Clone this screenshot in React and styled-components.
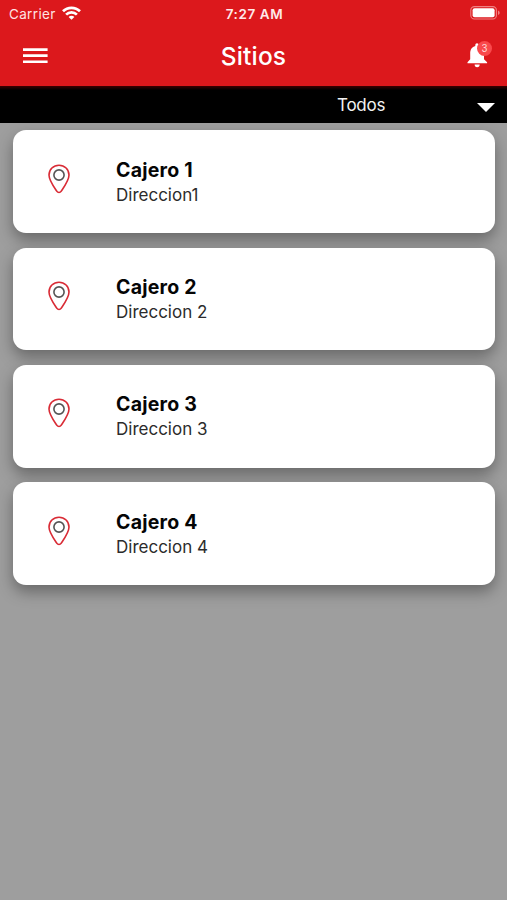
import React from 'react';
import styled, { createGlobalStyle } from 'styled-components';

const GlobalStyle = createGlobalStyle`
  * {
    box-sizing: border-box;
  }

  body {
    margin: 0;
    background: #9e9e9e;
    font-family: Inter, 'Liberation Sans', sans-serif;
  }
`;

const Screen = styled.div`
  display: flex;
  flex-direction: column;
  width: 100%;
  height: 100vh;
  overflow: hidden;
  background: #9e9e9e;
`;

const Header = styled.header`
  height: 86px;
  background: #dc181c;
  color: #fff;
`;

const StatusBar = styled.div`
  display: grid;
  grid-template-columns: 1fr auto 1fr;
  align-items: center;
  height: 27px;
  padding: 0 7px 0 9px;
`;

const Carrier = styled.div`
  display: flex;
  align-items: center;
  gap: 6px;
  font-size: 13.5px;
  line-height: 28px;
  letter-spacing: 0.34px;
  color: #ffe3e3;

  svg {
    margin-bottom: 2px;
  }
`;

const Time = styled.div`
  font-size: 13.5px;
  font-weight: 600;
  line-height: 28px;
  letter-spacing: 0.6px;
  color: #ffe9e9;
`;

const Battery = styled.svg`
  justify-self: end;
  margin-bottom: 2px;
`;

const NavBar = styled.div`
  display: grid;
  grid-template-columns: 1fr auto 1fr;
  align-items: center;
  height: 58px;
  padding: 0 13px;
`;

const Title = styled.h1`
  margin: 0;
  font-size: 24.5px;
  font-weight: 500;
  line-height: 58px;
  letter-spacing: 0.15px;
`;

const IconButton = styled.button`
  display: flex;
  position: relative;
  justify-self: ${(props) => (props.$end ? 'end' : 'start')};
  margin-left: ${(props) => (props.$end ? 0 : '10px')};
  padding: 0;
  border: none;
  background: none;
  color: #fff;
  cursor: pointer;

  svg {
    margin-bottom: ${(props) => (props.$end ? '2px' : '1px')};
  }
`;

const Badge = styled.span`
  position: absolute;
  top: 0;
  right: 2px;
  width: 15px;
  height: 15px;
  border-radius: 50%;
  background: #f9494c;
  color: #ffdada;
  font-size: 10px;
  line-height: 15px;
  text-align: center;
`;

const FilterBar = styled.div`
  display: flex;
  justify-content: flex-end;
  height: 37px;
  padding-right: 12px;
  background: linear-gradient(#3c0000, #000 4px);
`;

const Select = styled.button`
  display: flex;
  align-items: center;
  justify-content: space-between;
  width: 158px;
  height: 37px;
  padding: 0;
  border: none;
  background: none;
  color: #f2f2f2;
  font-family: inherit;
  font-size: 17px;
  letter-spacing: -0.25px;
  cursor: pointer;

  svg {
    margin-top: 5px;
  }
`;

const List = styled.main`
  display: flex;
  flex-direction: column;
  gap: 14.6px;
  padding: 7.4px 12.5px 0 13px;
`;

const Card = styled.article`
  display: flex;
  height: 102.7px;
  padding: 26.5px 35px 0;
  border-radius: 13px;
  background: #fff;
  box-shadow: 0 7px 15px rgba(0, 0, 0, 0.34);
`;

const PinBox = styled.div`
  width: 68px;
  padding-top: 7px;
`;

const Name = styled.h2`
  margin: 0;
  font-size: 19.5px;
  font-weight: 700;
  line-height: 26px;
  letter-spacing: 0.24px;
  color: #050505;
`;

const Address = styled.p`
  margin: 0;
  font-size: 17px;
  line-height: 25.6px;
  letter-spacing: 0;
  color: #2b2b2b;
`;

const sites = [
  { id: 1, name: 'Cajero 1', address: 'Direccion1' },
  { id: 2, name: 'Cajero 2', address: 'Direccion 2' },
  { id: 3, name: 'Cajero 3', address: 'Direccion 3' },
  { id: 4, name: 'Cajero 4', address: 'Direccion 4' },
];

const WifiIcon = () => (
  <svg width="19" height="14" viewBox="0 0 19 14" fill="none" stroke="#fff" strokeWidth="2.7">
    <path d="M1 5.3C5.7.6 13.3.6 18 5.3" />
    <path d="M4.1 8.6C7.1 5.6 11.9 5.6 14.9 8.6" />
    <path d="M9.5 13.8 6.6 11C8.2 9.4 10.8 9.4 12.4 11Z" fill="#fff" stroke="none" />
  </svg>
);

const BatteryIcon = () => (
  <Battery width="30" height="14" viewBox="0 0 30 14">
    <rect x="0.8" y="0.6" width="25.6" height="12.4" rx="3.6" fill="none" stroke="#f08082" strokeWidth="1.1" />
    <rect x="2.6" y="2.3" width="22" height="9" rx="2" fill="#fff" />
    <path d="M28 4.6c2.2.8 2.2 3.6 0 4.4z" fill="#f08082" />
  </Battery>
);

const MenuIcon = () => (
  <svg width="25" height="16" viewBox="0 0 25 16" fill="#fff">
    <path d="M0 .2h24.6v2.7H0zM0 6.3h24.6v2.7H0zM0 12.4h24.6v2.7H0z" />
  </svg>
);

const BellIcon = () => (
  <svg width="27" height="28" viewBox="0 0 27 28" fill="#fff">
    <path d="M8.3 4.2c0-1.1.7-1.9 1.7-1.9s1.7.8 1.7 1.9v.7c3.4.8 5.3 3.7 5.3 7.2v6.1l3.1 3.1v1H.5v-1l2.7-3.1v-6.1c0-3.5 1.8-6.4 5.1-7.2z" />
    <path d="M7.6 23.6h5.1a2.5 2.5 0 0 1-5.1 0z" />
  </svg>
);

const PinIcon = () => (
  <svg width="22" height="30" viewBox="0 0 22 30" fill="none">
    <path
      d="M11 1.2C5.4 1.2 1 5.5 1 11c0 5.3 5.1 12.2 7.9 16.4 1 1.5 3.2 1.5 4.2 0C15.9 23.2 21 16.3 21 11c0-5.5-4.4-9.8-10-9.8z"
      stroke="#d92b35"
      strokeWidth="1.6"
    />
    <circle cx="11" cy="11" r="5.1" stroke="#555" strokeWidth="1.6" />
  </svg>
);

const App = () => (
  <>
    <GlobalStyle />
    <Screen>
      <Header>
        <StatusBar>
          <Carrier>
            Carrier
            <WifiIcon />
          </Carrier>
          <Time>7:27 AM</Time>
          <BatteryIcon />
        </StatusBar>
        <NavBar>
          <IconButton aria-label="Menu">
            <MenuIcon />
          </IconButton>
          <Title>Sitios</Title>
          <IconButton $end aria-label="Notificaciones">
            <BellIcon />
            <Badge>3</Badge>
          </IconButton>
        </NavBar>
      </Header>
      <FilterBar>
        <Select>
          Todos
          <svg width="18" height="9" viewBox="0 0 18 9" fill="#fff">
            <path d="M0 0h18L9 9z" />
          </svg>
        </Select>
      </FilterBar>
      <List>
        {sites.map((site) => (
          <Card key={site.id}>
            <PinBox>
              <PinIcon />
            </PinBox>
            <div>
              <Name>{site.name}</Name>
              <Address>{site.address}</Address>
            </div>
          </Card>
        ))}
      </List>
    </Screen>
  </>
);

export default App;
